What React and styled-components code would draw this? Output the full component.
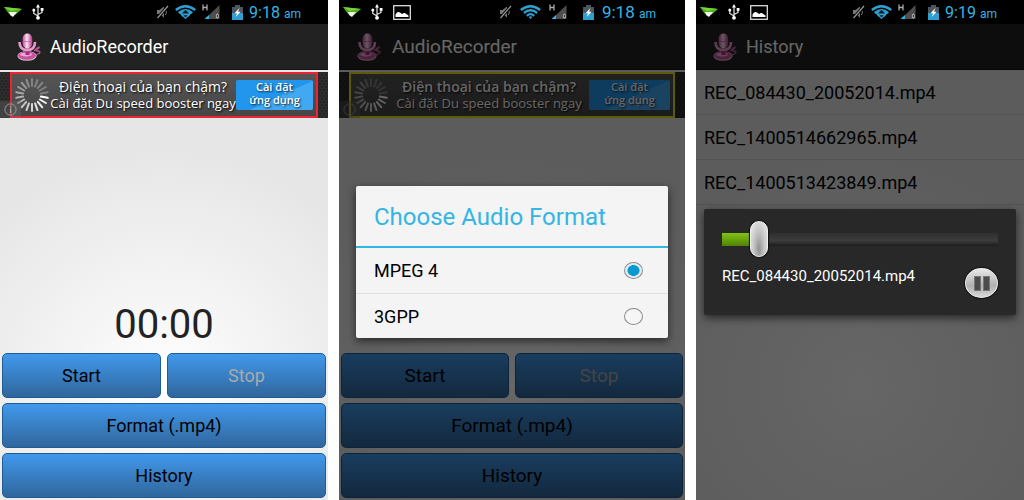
import { useState } from "react";
import styled, { createGlobalStyle } from "styled-components";

const GlobalStyle = createGlobalStyle`
  * {
    box-sizing: border-box;
  }
  body {
    margin: 0;
    background: #fff;
    font-family: Roboto, sans-serif;
  }
  button, input {
    font: inherit;
    margin: 0;
  }
`;

const Gallery = styled.main`
  display: grid;
  grid-template-columns: 328fr 346fr 328fr;
  gap: 11px;
  min-height: 100vh;
`;

const Phone = styled.section`
  display: flex;
  flex-direction: column;
  min-width: 0;
  font-size: ${(props) => (props.$wide ? "19px" : "18px")};
`;

const StatusBar = styled.div`
  display: flex;
  justify-content: space-between;
  align-items: center;
  height: 24px;
  padding: 0 ${(props) => (props.$wide ? "29px" : "27px")} 0 4px;
  background: #000;
`;

const Notifications = styled.div`
  display: flex;
  align-items: center;
  gap: 10px;
`;

const Indicators = styled.div`
  display: flex;
  align-items: center;
  gap: ${(props) => (props.$wide ? "8px" : "6px")};
`;

const Clock = styled.span`
  color: #33b5e5;
  font-size: ${(props) => (props.$wide ? "17px" : "16px")};
  line-height: 24px;
  padding-top: 2px;
  white-space: nowrap;
`;

const Meridiem = styled.small`
  font-size: 12px;
`;

const Screen = styled.div`
  position: relative;
  flex: 1;
  display: flex;
  flex-direction: column;
  background: radial-gradient(
    circle at 50% 76%,
    #ffffff 0,
    #f4f4f4 100px,
    #e6e6e6 240px
  );
`;

const ActionBar = styled.header`
  display: flex;
  align-items: center;
  gap: ${(props) => (props.$wide ? "10px" : "8px")};
  height: 46px;
  padding-left: ${(props) => (props.$wide ? "18px" : "17px")};
  background: #222;
  border-bottom: 1px solid #111;
`;

const Title = styled.h1`
  margin: 0;
  color: #fff;
  font-size: inherit;
  font-weight: normal;
`;

const AdStrip = styled.div`
  position: relative;
  margin-top: 2px;
  height: 46px;
  padding: 0 10px;
  background-color: #353535;
  background-image: radial-gradient(circle, #232323 1px, transparent 2px),
    radial-gradient(circle, #232323 1px, transparent 2px);
  background-size: 4px 6px;
  background-position: 0 0, 2px 3px;
`;

const AdFrame = styled.div`
  display: flex;
  align-items: center;
  height: 100%;
  padding: 0 3px 0 2px;
  border: 2px solid ${(props) => props.color};
  background: linear-gradient(#555, #464646);
  font-family: "Open Sans", sans-serif;
  color: #fff;
  text-shadow: 1px 1px 2px #000;
`;

const AdText = styled.p`
  flex: 1;
  margin: 0;
  text-align: center;
  white-space: nowrap;
  font-size: 13px;
  font-weight: ${(props) => (props.$wide ? 500 : 400)};
  line-height: 17px;
`;

const AdHeadline = styled.strong`
  display: block;
  font-size: 14px;
  font-weight: ${(props) => (props.$wide ? 600 : 500)};
`;

const AdButton = styled.button`
  width: ${(props) => (props.$wide ? "81px" : "77px")};
  height: 30px;
  padding: 0 0 4px;
  border: 0;
  border-radius: 2px;
  background: linear-gradient(155deg, #2196ec 55%, #41a8f2 56%);
  color: #fff;
  font-size: 11px;
  line-height: 13px;
  font-weight: 600;
  text-shadow: 1px 1px 2px #123;
`;

const AdInfo = styled.span`
  position: absolute;
  left: 0;
  bottom: 0;
  display: flex;
  align-items: center;
  justify-content: center;
  width: 21px;
  height: 17px;
  background: rgba(110, 110, 110, 0.35);
`;

const Timer = styled.div`
  flex: 1;
  display: flex;
  align-items: flex-end;
  justify-content: center;
  padding-bottom: 5px;
  color: #222;
  font-size: 40px;
  line-height: 46px;
`;

const Controls = styled.div`
  display: grid;
  grid-template-columns: 1fr 1fr;
  gap: 5px 6px;
  padding: 0 2px 2px;
`;

const BlueButton = styled.button`
  grid-column: ${(props) => (props.$full ? "1 / -1" : "auto")};
  height: 45px;
  padding: 0;
  border: 1px solid #1f5b94;
  border-radius: 5px;
  background: linear-gradient(#4199ec, #30669c);
  color: #000;
  &:disabled {
    color: #aaa;
  }
`;

const Scrim = styled.div`
  position: absolute;
  inset: 0;
  display: flex;
  align-items: center;
  padding: 0 ${(props) => (props.$inset ? props.$inset : "8px")};
  background: rgba(0, 0, 0, 0.6);
`;

const Dialog = styled.form`
  flex: 1;
  background: #f4f4f4;
  border-radius: 2px;
  box-shadow: 0 3px 9px rgba(0, 0, 0, 0.6);
`;

const DialogTitle = styled.h2`
  margin: 0;
  padding: 2px 18px 0;
  border-bottom: 2px solid #33b5e5;
  color: #33b5e5;
  font-size: 24px;
  font-weight: normal;
  line-height: 58px;
`;

const Choice = styled.label`
  display: flex;
  align-items: center;
  justify-content: space-between;
  height: 45px;
  padding: 0 25px 0 18px;
  color: #000;
  font-size: 18px;
  & + & {
    border-top: 1px solid #e0e0e0;
  }
`;

const Radio = styled.input`
  appearance: none;
  width: 19px;
  height: 17px;
  border: 1px solid #8b8b8b;
  border-radius: 50%;
  background: #f6f6f6;
  &:checked {
    background: radial-gradient(
      closest-side,
      #0a98cf 68%,
      #d3eaf3 74%,
      #e8f2f6 100%
    );
  }
`;

const Recordings = styled.ul`
  margin: 0;
  padding: 0;
  list-style: none;
`;

const Recording = styled.li`
  height: 45px;
  padding-left: 8px;
  border-bottom: 1px solid #d2d2d2;
  color: #000;
  line-height: 45px;
`;

const Player = styled.div`
  flex: 1;
  padding: 12px 18px 17px;
  border-radius: 2px;
  background: #282828;
  box-shadow: 0 3px 9px rgba(0, 0, 0, 0.6);
`;

const Seek = styled.input`
  appearance: none;
  display: block;
  width: 100%;
  height: 36px;
  background: linear-gradient(#82c414, #4f8206) 0 50% / var(--played) 13px
      no-repeat,
    linear-gradient(#2e2e2e, #3c3c3c 60%, #1c1c1c) 0 50% / 100% 13px no-repeat;
  &::-webkit-slider-thumb {
    appearance: none;
    width: 18px;
    height: 36px;
    border: 1px solid #eee;
    border-radius: 9px;
    background: radial-gradient(ellipse at 50% 78%, #929292, #c4c4c4 45%, #eee);
    box-shadow: 0 0 1px 1px #111;
  }
`;

const PlayerRow = styled.div`
  display: flex;
  justify-content: space-between;
  align-items: flex-start;
  padding-top: 11px;
`;

const FileName = styled.span`
  color: #fff;
  font-size: 15px;
  line-height: 16px;
`;

const PauseButton = styled.button`
  display: flex;
  align-items: center;
  justify-content: center;
  width: 33px;
  height: 30px;
  padding: 0;
  border: 1px solid #eee;
  border-radius: 50%;
  background: linear-gradient(#e8e8e8, #b0b0b0 60%, #d8d8d8);
  box-shadow: 0 0 1px 1px #111;
`;

const PlaneIcon = () => (
  <svg width="18" height="12" viewBox="0 0 18 12" aria-hidden="true">
    <path d="M0 1 L18 3 L11 9 L8 6 L5 8 Z" fill="#4fae20" />
    <path d="M0 1 L18 3 L7 5 Z" fill="#7bd33a" />
    <path d="M5 6 L13 6 L9 11 L6 9 Z" fill="#f2f7ee" />
  </svg>
);

const UsbIcon = () => (
  <svg width="12" height="16" viewBox="0 0 12 16" aria-hidden="true">
    <path
      d="M6 3 V13 M6 12 L1.8 9.5 V6.5 M6 10.5 L10 8.5 V5.5"
      fill="none"
      stroke="#e8e8e8"
      strokeWidth="1.2"
    />
    <path d="M6 0 L8 3.5 H4 Z" fill="#fff" />
    <circle cx="6" cy="13.8" r="1.9" fill="#fff" />
    <circle cx="1.8" cy="6" r="1.5" fill="#fff" />
    <rect x="8.7" y="4" width="2.8" height="2.8" fill="#fff" />
  </svg>
);

const PictureIcon = () => (
  <svg width="18" height="15" viewBox="0 0 18 15" aria-hidden="true">
    <rect
      x="0.7"
      y="0.7"
      width="16.6"
      height="13.6"
      fill="none"
      stroke="#ddd"
      strokeWidth="1.3"
    />
    <path
      d="M2.5 12 V9.5 Q4.5 6 7 7.5 L9 9 Q11.5 7 13 8.8 L15.5 10.5 V12 Z"
      fill="#fff"
    />
  </svg>
);

const MutedIcon = () => (
  <svg width="13" height="14" viewBox="0 0 13 14" aria-hidden="true">
    <path d="M1 5 H3.5 L8 1.5 V12.5 L3.5 9 H1 Z" fill="#777" />
    <path d="M9.5 5 L10.5 7 L9.5 10" fill="none" stroke="#777" />
    <path d="M1.5 13 L12 1" stroke="#000" strokeWidth="3" />
    <path d="M1.5 13 L12 1" stroke="#999" strokeWidth="1.2" />
  </svg>
);

const WifiIcon = ({ busy }) => (
  <svg width="21" height="14" viewBox="0 0 21 14" aria-hidden="true">
    <g fill="none" stroke="#2f9fd0" strokeWidth="2.3">
      <path d="M0.8 5 Q10.5 -2.6 20.2 5" />
      <path d="M3.9 8 Q10.5 2.4 17.1 8" />
      <path d="M6.8 10.8 Q10.5 7.4 14.2 10.8" />
    </g>
    <path d="M8.6 12 Q10.5 10.4 12.4 12 L10.5 14 Z" fill="#2f9fd0" />
    {busy && (
      <>
        <path d="M3 7 H18 L10.5 14 Z" fill="#2f9fd0" />
        <path d="M10.5 4.8 L14 8.6 H7 Z" fill="#06202c" />
        <path d="M8.4 10.2 H12.6 L10.5 12.4 Z" fill="#06202c" />
      </>
    )}
  </svg>
);

const SignalIcon = () => (
  <svg width="18" height="16" viewBox="0 0 18 16" aria-hidden="true">
    <path
      d="M1 0.5 V6.5 M5 0.5 V6.5 M1 3.5 H5"
      fill="none"
      stroke="#aaa"
      strokeWidth="1.3"
    />
    <path d="M17.5 1 V15 H3 Z" fill="#4e4e4e" />
    <path d="M7 11 V15 H2.5 Z" fill="#33b5e5" />
    <ellipse cx="15.4" cy="12" rx="1.6" ry="2.5" fill="#aaa" />
    <path d="M15.4 11 V13" stroke="#222" />
  </svg>
);

const BatteryIcon = () => (
  <svg width="11" height="15" viewBox="0 0 11 15" aria-hidden="true">
    <path d="M3 0 H8 V2 H11 V9 H0 V2 H3 Z" fill="#4b5660" />
    <rect y="8" width="11" height="7" fill="#2f9fd0" />
    <path d="M7.5 3 L2.5 8.3 H5 L3.8 12 L8.6 6.8 H6 Z" fill="#fff" />
  </svg>
);

const MicIcon = () => (
  <svg width="25" height="28" viewBox="0 0 25 28" aria-hidden="true">
    <defs>
      <linearGradient id="mic" x1="0" x2="1">
        <stop offset="0" stopColor="#c4479a" />
        <stop offset="0.45" stopColor="#ffe0f3" />
        <stop offset="1" stopColor="#b13586" />
      </linearGradient>
    </defs>
    <path
      d="M17 18 Q23 12 22 15 Q17 18 21 18 Q25 19 21 21 L17 23"
      fill="none"
      stroke="#b65a94"
      strokeWidth="1.3"
    />
    <ellipse cx="10" cy="23" rx="9.6" ry="4.8" fill="#d9c4d0" />
    <ellipse cx="10" cy="22.6" rx="9" ry="4.2" fill="#c9529e" />
    <ellipse cx="9" cy="21.6" rx="6" ry="1.8" fill="#f0a8d3" />
    <path d="M8.5 15 H12.5 V22 H8.5 Z" fill="#a82f7d" />
    <path
      d="M2.5 9 Q2.5 17 10.3 17 Q18 17 18 9"
      fill="none"
      stroke="#e59aca"
      strokeWidth="2.6"
    />
    <rect x="5.6" y="0.5" width="9.6" height="15" rx="4.8" fill="url(#mic)" />
    <path d="M5.6 8.5 H15.2" stroke="#c860a3" strokeWidth="0.8" />
  </svg>
);

const SPOKES = Array.from({ length: 18 }, (_, i) => i);

// brightest spoke points to the right, fading clockwise
const spokeOpacity = (i) => (i < 5 ? 0.28 : Math.max(0.28, 1 - (i - 5) * 0.055));

const Spinner = () => (
  <svg width="36" height="34" viewBox="-18 -17 36 34" aria-hidden="true">
    {SPOKES.map((i) => (
      <path
        key={i}
        d="M0 -9 V-16"
        stroke="#fff"
        strokeWidth="2"
        strokeLinecap="round"
        opacity={spokeOpacity(i)}
        transform={`rotate(${i * 20})`}
      />
    ))}
  </svg>
);

const InfoIcon = () => (
  <svg width="13" height="13" viewBox="0 0 13 13" aria-hidden="true">
    <circle cx="6.5" cy="6.5" r="5.6" fill="none" stroke="#999" />
    <path d="M6.5 3 V4.4 M6.5 5.6 V10" stroke="#aaa" strokeWidth="1.2" />
  </svg>
);

const PauseIcon = () => (
  <svg width="16" height="15" viewBox="0 0 16 15" aria-hidden="true">
    <g fill="#4c4c4c" stroke="#777">
      <rect x="0.5" y="0.5" width="6" height="14" />
      <rect x="9.5" y="0.5" width="6" height="14" />
    </g>
  </svg>
);

function Status({ time, screenshot, wide }) {
  return (
    <StatusBar $wide={wide}>
      <Notifications>
        <PlaneIcon />
        <UsbIcon />
        {screenshot && <PictureIcon />}
      </Notifications>
      <Indicators $wide={wide}>
        <MutedIcon />
        <WifiIcon busy={!wide} />
        <SignalIcon />
        <span />
        <BatteryIcon />
        <Clock $wide={wide}>
          {time} <Meridiem>am</Meridiem>
        </Clock>
      </Indicators>
    </StatusBar>
  );
}

function Recorder({ wide, adColor }) {
  return (
    <>
      <ActionBar $wide={wide}>
        <MicIcon />
        <Title>AudioRecorder</Title>
      </ActionBar>
      <AdStrip>
        <AdFrame color={adColor}>
          <Spinner />
          <AdText $wide={wide}>
            <AdHeadline $wide={wide}>Điện thoại của bạn chậm?</AdHeadline>
            Cài đặt Du speed booster ngay
          </AdText>
          <AdButton type="button" $wide={wide}>
            Cài đặt
            <br />
            ứng dụng
          </AdButton>
        </AdFrame>
        <AdInfo>
          <InfoIcon />
        </AdInfo>
      </AdStrip>
      <Timer>00:00</Timer>
      <Controls>
        <BlueButton type="button">Start</BlueButton>
        <BlueButton type="button" disabled>
          Stop
        </BlueButton>
        <BlueButton type="button" $full>
          Format (.mp4)
        </BlueButton>
        <BlueButton type="button" $full>
          History
        </BlueButton>
      </Controls>
    </>
  );
}

const FORMATS = ["MPEG 4", "3GPP"];

function FormatDialog() {
  const [format, setFormat] = useState("MPEG 4");
  return (
    <Dialog>
      <DialogTitle>Choose Audio Format</DialogTitle>
      {FORMATS.map((name) => (
        <Choice key={name}>
          {name}
          <Radio
            type="radio"
            name="format"
            checked={format === name}
            onChange={() => setFormat(name)}
          />
        </Choice>
      ))}
    </Dialog>
  );
}

const FILES = [
  "REC_084430_20052014.mp4",
  "REC_1400514662965.mp4",
  "REC_1400513423849.mp4",
];

function PlayerPopup({ file }) {
  const [position, setPosition] = useState(11);
  return (
    <Player>
      <Seek
        type="range"
        aria-label="Position"
        value={position}
        style={{ "--played": `${position}%` }}
        onChange={(e) => setPosition(Number(e.target.value))}
      />
      <PlayerRow>
        <FileName>{file}</FileName>
        <PauseButton type="button" aria-label="Pause">
          <PauseIcon />
        </PauseButton>
      </PlayerRow>
    </Player>
  );
}

function App() {
  return (
    <Gallery>
      <GlobalStyle />
      <Phone>
        <Status time="9:18" />
        <Screen>
          <Recorder adColor="#ee2233" />
        </Screen>
      </Phone>
      <Phone $wide>
        <Status time="9:18" screenshot wide />
        <Screen>
          <Recorder wide adColor="#e6e010" />
          <Scrim $inset="17px">
            <FormatDialog />
          </Scrim>
        </Screen>
      </Phone>
      <Phone>
        <Status time="9:19" screenshot />
        <Screen>
          <ActionBar>
            <MicIcon />
            <Title>History</Title>
          </ActionBar>
          <Recordings>
            {FILES.map((file) => (
              <Recording key={file}>{file}</Recording>
            ))}
          </Recordings>
          <Scrim>
            <PlayerPopup file={FILES[0]} />
          </Scrim>
        </Screen>
      </Phone>
    </Gallery>
  );
}

export default App;
